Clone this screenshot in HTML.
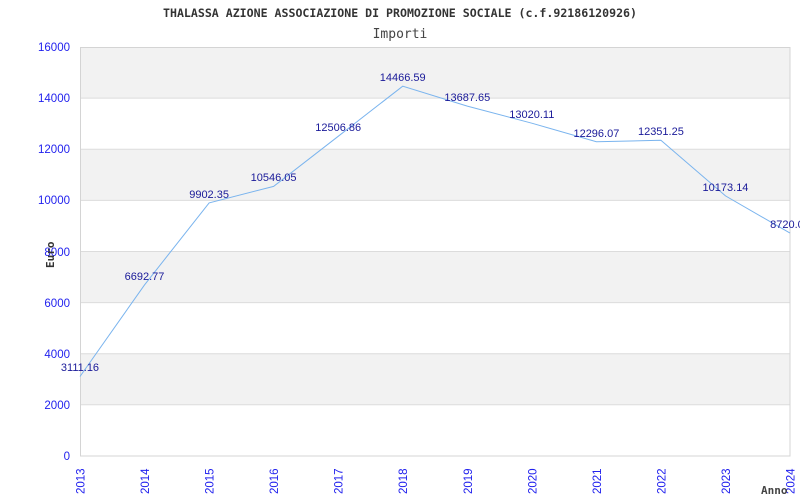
<!DOCTYPE html>
<html><head><meta charset="utf-8"><style>
html,body{margin:0;padding:0;background:#fff;width:800px;height:500px;overflow:hidden}
svg{display:block}
.t{font-family:"DejaVu Sans Mono","Liberation Mono",monospace}
.ax{font-family:"Liberation Sans",sans-serif;font-size:11.5px;fill:#2222ee}
.lb{font-family:"Liberation Sans",sans-serif;font-size:11px;fill:#1a1a99}
</style></head><body>
<svg width="800" height="500" xmlns="http://www.w3.org/2000/svg">
<text x="163" y="17" textLength="474" lengthAdjust="spacingAndGlyphs" class="t" font-size="11.5" font-weight="bold" fill="#333">THALASSA AZIONE ASSOCIAZIONE DI PROMOZIONE SOCIALE (c.f.92186120926)</text>
<text x="400" y="38" text-anchor="middle" class="t" font-size="13" fill="#444">Importi</text>
<rect x="80" y="47" width="710" height="409" fill="#fff"/>
<rect x="80" y="47" width="710" height="51.1" fill="#f2f2f2"/>
<rect x="80" y="149.2" width="710" height="51.1" fill="#f2f2f2"/>
<rect x="80" y="251.5" width="710" height="51.1" fill="#f2f2f2"/>
<rect x="80" y="353.7" width="710" height="51.1" fill="#f2f2f2"/>
<g stroke="#dcdcdc" stroke-width="1">
<line x1="80" y1="98.1" x2="790" y2="98.1"/><line x1="80" y1="149.2" x2="790" y2="149.2"/>
<line x1="80" y1="200.4" x2="790" y2="200.4"/><line x1="80" y1="251.5" x2="790" y2="251.5"/>
<line x1="80" y1="302.6" x2="790" y2="302.6"/><line x1="80" y1="353.7" x2="790" y2="353.7"/>
<line x1="80" y1="404.8" x2="790" y2="404.8"/>
</g>
<rect x="80.5" y="47.5" width="709.5" height="408.5" fill="none" stroke="#d4d4d4"/>
<g class="ax" text-anchor="end">
<text x="70" y="51">16000</text><text x="70" y="102">14000</text><text x="70" y="153">12000</text>
<text x="70" y="204">10000</text><text x="70" y="256">8000</text><text x="70" y="307">6000</text>
<text x="70" y="358">4000</text><text x="70" y="409">2000</text><text x="70" y="460">0</text>
</g>
<g class="ax">
<text transform="translate(84.5,494) rotate(-90)">2013</text>
<text transform="translate(149,494) rotate(-90)">2014</text>
<text transform="translate(213.6,494) rotate(-90)">2015</text>
<text transform="translate(278.1,494) rotate(-90)">2016</text>
<text transform="translate(342.7,494) rotate(-90)">2017</text>
<text transform="translate(407.2,494) rotate(-90)">2018</text>
<text transform="translate(471.8,494) rotate(-90)">2019</text>
<text transform="translate(536.3,494) rotate(-90)">2020</text>
<text transform="translate(600.9,494) rotate(-90)">2021</text>
<text transform="translate(665.4,494) rotate(-90)">2022</text>
<text transform="translate(730,494) rotate(-90)">2023</text>
<text transform="translate(794.5,494) rotate(-90)">2024</text>
</g>
<polyline fill="none" stroke="#7ab4ee" stroke-width="1" points="80,376.5 144.5,284.9 209.1,202.9 273.6,186.4 338.2,136.3 402.7,86.2 467.3,106.1 531.8,123.2 596.4,141.7 660.9,140.3 725.5,195.9 790,233.1"/>
<g class="lb" text-anchor="middle">
<text x="80" y="371">3111.16</text>
<text x="144.5" y="280">6692.77</text>
<text x="209.1" y="198">9902.35</text>
<text x="273.6" y="181">10546.05</text>
<text x="338.2" y="131">12506.86</text>
<text x="402.7" y="81">14466.59</text>
<text x="467.3" y="101">13687.65</text>
<text x="531.8" y="118">13020.11</text>
<text x="596.4" y="137">12296.07</text>
<text x="660.9" y="135">12351.25</text>
<text x="725.5" y="191">10173.14</text>
<text x="790" y="228">8720.00</text>
</g>
<text transform="translate(54,268) rotate(-90)" class="t" font-size="11" font-weight="bold" fill="#333">Euro</text>
<text x="761" y="494" class="t" font-size="11" font-weight="bold" fill="#444">Anno</text>
</svg>
</body></html>
